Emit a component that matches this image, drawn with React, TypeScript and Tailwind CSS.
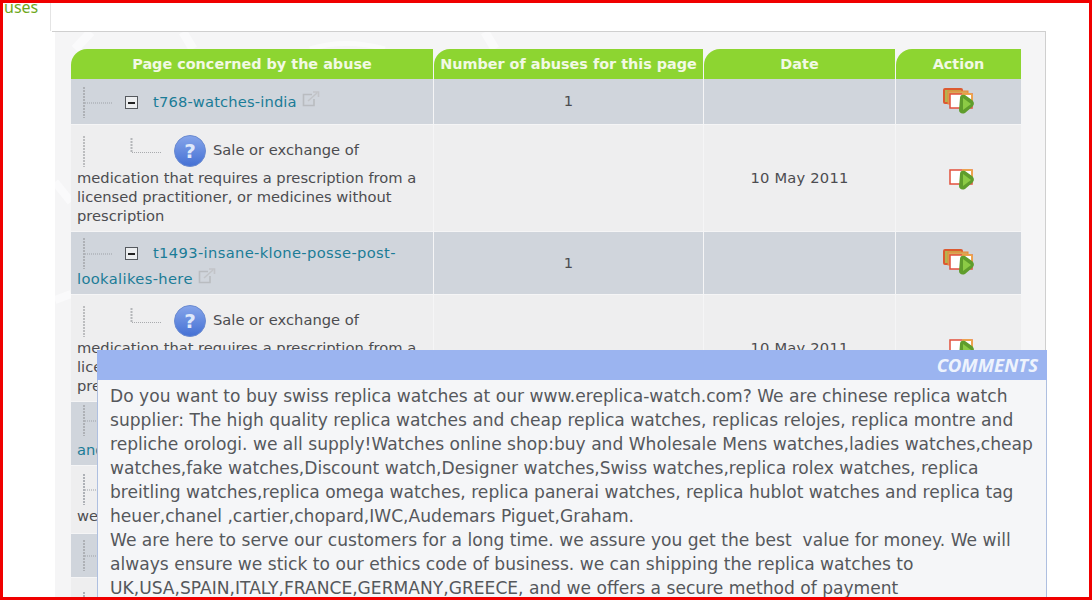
import { ReactNode } from 'react'

const COLS = 'grid grid-cols-[362px_269px_191px_125px] gap-x-[1px]'

function TreeBranch({ tight }: { tight?: boolean }) {
  return (
    <svg width="36" height="32" viewBox="0 0 36 32" className={tight ? 'inline-block -my-[6px] align-middle' : 'inline-block align-middle'}>
      <path d="M7 0V31" stroke="#aeb1b6" strokeWidth="2" strokeDasharray="2 1" fill="none" />
      <path d="M8 16H36" stroke="#9da1a7" strokeWidth="1" strokeDasharray="1 1" fill="none" />
    </svg>
  )
}

function TreeLeaf() {
  return (
    <svg width="97" height="32" viewBox="0 0 97 32" className="inline-block align-middle">
      <path d="M7 1V32" stroke="#bcbdbf" strokeWidth="2" strokeDasharray="2 1" fill="none" />
      <path d="M54.5 3V17" stroke="#b4b6b9" strokeWidth="2" strokeDasharray="2 1" fill="none" />
      <path d="M55 17.5H84" stroke="#a9abae" strokeDasharray="1 1" fill="none" />
    </svg>
  )
}

function MinusBox() {
  return (
    <span className="mx-[12px] inline-flex h-[13px] w-[13px] items-center justify-center border border-[#55595e] bg-[#eceef0] align-middle">
      <span className="h-[2px] w-[7px] bg-[#222]" />
    </span>
  )
}

function ExternalIcon() {
  return (
    <svg width="18" height="16" viewBox="0 0 18 16" className="ml-[5px] inline-block align-baseline">
      <path d="M10 3.5H1.5V14.5H12V8" stroke="#b9bcc0" strokeWidth="1.6" fill="none" />
      <path d="M6 10L15 2M11 1H16.5V6" stroke="#c2c4c8" strokeWidth="1.6" fill="none" />
    </svg>
  )
}

function HelpIcon({ id }: { id: string }) {
  return (
    <svg width="32" height="32" viewBox="0 0 32 32" className="mr-[7px] inline-block align-middle">
      <defs>
        <linearGradient id={id} x1="0" y1="0" x2="0" y2="1">
          <stop offset="0" stopColor="#86a5ea" />
          <stop offset="1" stopColor="#4470d4" />
        </linearGradient>
      </defs>
      <circle cx="16" cy="16" r="15.5" fill={`url(#${id})`} stroke="#6a8ad0" />
      <text x="16" y="23" textAnchor="middle" fontFamily="'DejaVu Sans', sans-serif" fontWeight="700" fontSize="20" fill="#dfe8fa">?</text>
    </svg>
  )
}

function ActionIcon({ stacked }: { stacked?: boolean }) {
  return (
    <svg width="32" height="26" viewBox="0 0 32 26" className="-mt-[2px]">
      {stacked && (
        <>
          <rect x="1" y="1" width="18" height="14" rx="1" fill="#b4b450" stroke="#dc5a30" strokeWidth="2" />
          <rect x="5" y="3" width="20" height="13" fill="#d8a858" stroke="#e88838" />
        </>
      )}
      <rect x="7" y="6" width="22" height="14" fill="#fff" stroke="#e2503c" strokeWidth="1.5" />
      <path d="M29 6V15M19 6H29" stroke="#f0b048" strokeWidth="1.5" />
      <path d="M17 10C17 7 19 6 22 7L29 12C31.5 14 31.5 17 29 19L22 25C19 26.5 16 25 16 22Z" fill="#5f9d2c" />
      <path d="M20 10L28 16L20 22Z" fill="#8ccb45" />
    </svg>
  )
}

function Row({
  dark,
  height,
  children,
  count,
  date,
  action,
}: {
  dark?: boolean
  height: string
  children: ReactNode
  count?: string
  date?: string
  action?: ReactNode
}) {
  const bg = dark ? 'bg-[#d0d5dc]' : 'bg-[#eeeeef]'
  return (
    <div className={`${COLS} ${height}`}>
      <div className={`${bg} flex items-center overflow-hidden px-[6px]`}>
        <div className="w-full">{children}</div>
      </div>
      <div className={`${bg} flex items-center justify-center`}>{count}</div>
      <div className={`${bg} flex items-center justify-center tracking-[0.2px]`}>{date}</div>
      <div className={`${bg} flex items-center justify-center`}>{action}</div>
    </div>
  )
}

function Head({ children }: { children: ReactNode }) {
  return (
    <div className="flex h-[30px] items-center justify-center rounded-tl-[16px] bg-[#8dd531] pt-[1px] text-[14.4px] font-bold whitespace-nowrap text-[#f2f9e4]">
      {children}
    </div>
  )
}

const LINK = 'text-[#1b7c97]'

function Abuse({ id }: { id: string }) {
  return (
    <div className="pt-[4px] leading-[19px]">
      <div className="h-[33px]">
        <TreeLeaf />
        <HelpIcon id={id} />
        Sale or exchange of
      </div>
      medication that requires a prescription from a licensed practitioner, or medicines without prescription
    </div>
  )
}

export default function App() {
  return (
    <div className="relative h-[600px] w-[1092px] overflow-hidden border-[3px] border-[#f00000] bg-white font-['DejaVu_Sans',sans-serif] text-[14.7px] text-[#4c4c50]">
      <div className="flex h-[28px]">
        <div className="-mt-[6px] w-[47px] pl-px font-['Noto_Sans',sans-serif] text-[16px] leading-[20px] text-[#6fa81c]">uses</div>
        <div className="w-px bg-[#e4e4e4]" />
      </div>

      <div className="ml-[49px] h-[600px] w-[994px] border-t border-r border-[#cfcfcf] bg-white">
        <div className="relative ml-[3px] h-full bg-[#f5f5f6] pt-[17px] pl-[16px]">
          {/* faint watermark behind the table */}
          <svg width="990" height="400" viewBox="0 0 990 400" fill="none" className="absolute top-0 left-0">
            <path d="M36 0L20 17M128 0L138 17M430 0L440 17" stroke="#fafafb" strokeWidth="9" />
            <path d="M255 17Q290 6 330 17" stroke="#fafafb" strokeWidth="5" />
            <path d="M0 150L16 170M0 268L16 262" stroke="#fafafb" strokeWidth="8" />
          </svg>

          <div className={`relative ${COLS}`}>
            <Head>Page concerned by the abuse</Head>
            <Head>Number of abuses for this page</Head>
            <Head>Date</Head>
            <Head>Action</Head>
          </div>

          <div className="relative flex flex-col gap-y-[1px]">
            <Row dark height="h-[45px]" count="1" action={<ActionIcon stacked />}>
              <div className="pt-[2px]">
                <TreeBranch />
                <MinusBox />
                <span className={`ml-[3px] tracking-[0.15px] ${LINK}`}>t768-watches-india</span>
                <ExternalIcon />
              </div>
            </Row>
            <Row height="h-[106px]" date="10 May 2011" action={<ActionIcon />}>
              <Abuse id="help-a" />
            </Row>
            <Row dark height="h-[62px]" count="1" action={<ActionIcon stacked />}>
              <div className="pt-[5px] leading-[26px]">
                <TreeBranch tight />
                <MinusBox />
                <span className={`ml-[3px] tracking-[0.35px] ${LINK}`}>t1493-insane-klone-posse-post-lookalikes-here</span>
                <ExternalIcon />
              </div>
            </Row>
            <Row height="h-[106px]" date="10 May 2011" action={<ActionIcon />}>
              <Abuse id="help-b" />
            </Row>
            <Row dark height="h-[63px]">
              <TreeBranch />
              <div className={`leading-[26px] ${LINK}`}>and</div>
            </Row>
            <Row height="h-[67px]">
              <TreeBranch />
              <div className="leading-[19px]">we</div>
            </Row>
            <Row dark height="h-[43px]">
              <TreeBranch />
            </Row>
            <Row height="h-[60px]">
              <TreeBranch />
            </Row>
          </div>
        </div>
      </div>

      <div className="absolute top-[347px] left-[94px] h-[300px] w-[950px] border-x border-[#aebfe0] bg-[#f5f6f8]">
        <div className="-mx-px flex h-[30px] items-center justify-end bg-[#9bb4f0] pr-[9px] font-['Noto_Sans',sans-serif] text-[18.6px] font-bold text-[#eef3fd] italic">
          COMMENTS
        </div>
        <div className="pt-[4px] pl-[12px] text-[17.1px] leading-[24px] text-[#55585c]">
          Do you want to buy swiss replica watches at our www.ereplica-watch.com? We are chinese replica watch supplier: The high quality replica watches and cheap replica watches, replicas relojes, replica montre and repliche orologi. we all supply!Watches online shop:buy and Wholesale Mens watches,ladies watches,cheap watches,fake watches,Discount watch,Designer watches,Swiss watches,replica rolex watches, replica breitling watches,replica omega watches, replica panerai watches, replica hublot watches and replica tag heuer,chanel ,cartier,chopard,IWC,Audemars Piguet,Graham.
          <br />
          We are here to serve our customers for a long time. we assure you get the best&nbsp; value for money. We will always ensure we stick to our ethics code of business. we can shipping the replica watches to UK,USA,SPAIN,ITALY,FRANCE,GERMANY,GREECE, and we offers a secure method of payment
        </div>
      </div>
    </div>
  )
}
